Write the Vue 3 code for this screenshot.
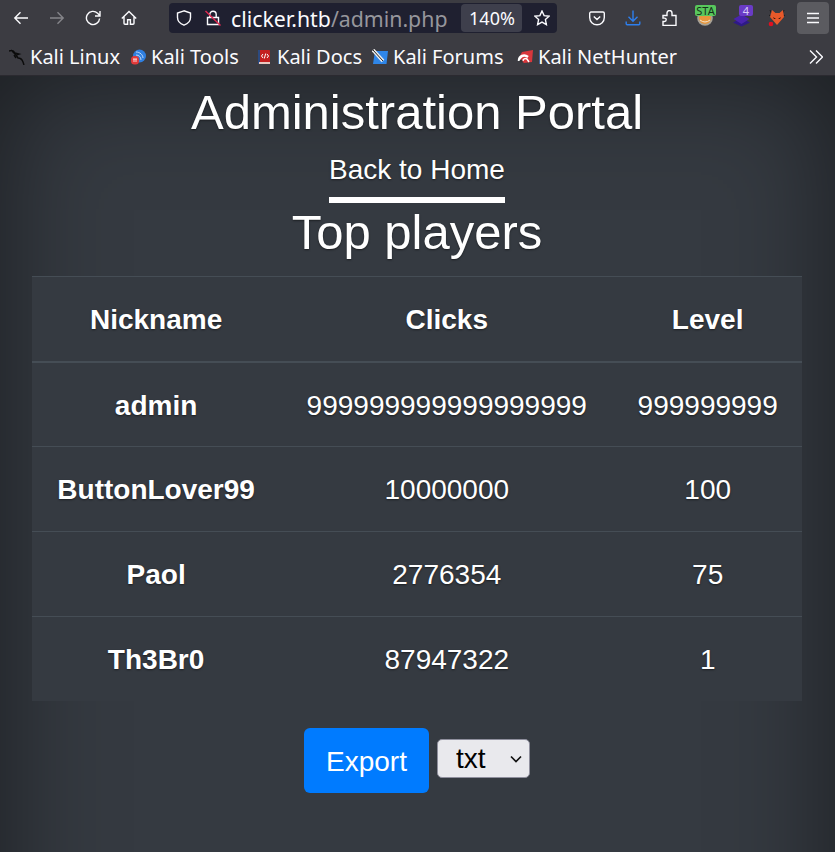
<script setup>
const players = [
  { nick: 'admin', clicks: '999999999999999999', level: '999999999' },
  { nick: 'ButtonLover99', clicks: '10000000', level: '100' },
  { nick: 'Paol', clicks: '2776354', level: '75' },
  { nick: 'Th3Br0', clicks: '87947322', level: '1' },
];
// width = distance to the next favicon
const bookmarks = [
  { name: 'Kali Linux', icon: 'linux', width: 121 },
  { name: 'Kali Tools', icon: 'tools', width: 126 },
  { name: 'Kali Docs', icon: 'docs', width: 116 },
  { name: 'Kali Forums', icon: 'forums', width: 145 },
  { name: 'Kali NetHunter', icon: 'nethunter', width: 170 },
];
</script>

<template>
  <div class="browser">
    <header class="chrome">
      <div class="toolbar">
        <div class="btns">
          <svg class="ico" viewBox="0 0 16 16"><path d="M15 8H1.800M7.500 2.300 1.800 8l5.700 5.700" /></svg>
          <svg class="ico dim" viewBox="0 0 16 16"><path d="M1 8h13.200M8.500 2.300 14.200 8l-5.700 5.700" /></svg>
          <svg class="ico" viewBox="0 0 16 16"><path d="M14.600 8.500A6.600 6.600 0 1 1 12.600 3.200L14.800 5.500M15 1v5H10" /></svg>
          <svg class="ico" viewBox="0 0 16 16"><path d="M.8 8.500 8 1.500l7.200 7M3 6.800v6.400c0 .7.400 1.100 1 1.100h2.600v-4.500h2.800v4.500H12c.600 0 1-.4 1-1.100V6.800" /></svg>
        </div>
        <div class="urlbar">
          <svg class="ico shield" viewBox="0 0 16 16"><path d="M8 .8 1.500 3v4.500c0 3.800 2.800 6.300 6.500 7.700 3.700-1.400 6.500-3.900 6.500-7.700V3z" /></svg>
          <svg class="ico lock" viewBox="0 0 16 16">
            <path d="M4.800 7.500V4.500a3.200 3.200 0 0 1 6.400 0V7.500M2.500 7.500h11v7h-11z" />
            <path class="red" d="M.5 1 15.500 15.500" />
          </svg>
          <span class="url">clicker.htb<span class="path">/admin.php</span></span>
          <span class="zoom">140%</span>
          <svg class="ico star" viewBox="0 0 16 16"><path d="M8 1l2.100 4.600 5 .6-3.700 3.400 1 5L8 12.100l-4.400 2.500 1-5L.9 6.200l5-.6z" /></svg>
        </div>
        <div class="tools">
          <svg class="ico" viewBox="0 0 16 16"><path d="M2 2h12a1.300 1.300 0 0 1 1.300 1.300V7.500a7.300 7.300 0 0 1-14.600 0V3.300A1.300 1.300 0 0 1 2 2zM4.800 6.500 8 9.600l3.200-3.100" /></svg>
          <svg class="ico blue" viewBox="0 0 16 16"><path d="M8 .5V11M3.500 6.800 8 11.300l4.500-4.500M1.200 11.500v2.300c0 .6.400 1 1 1h11.600c.6 0 1-.4 1-1v-2.300" /></svg>
          <svg class="ico" viewBox="0 0 16 16"><path d="M2 5.500h4V3a2.500 2.500 0 0 1 5 0v2.500h4V15.500H2v-4h1.500a1.700 1.700 0 0 0 0-3.400H2z" /></svg>
          <span class="ext">
            <svg viewBox="0 0 22 22" width="22" height="22">
              <circle cx="11" cy="11" r="7.800" fill="#a8a296" />
              <circle cx="11" cy="11" r="6" fill="#e8963c" />
              <path d="M6 13q5 4 10 0" fill="none" stroke="#f4e6d0" />
            </svg>
            <span class="tag green">STA</span>
          </span>
          <span class="ext">
            <svg viewBox="0 0 22 22" width="22" height="22">
              <path d="M11.500 11l8.500 4.500-8.500 4-8.500-4z" fill="#2e1a86" />
              <path d="M11.500 7.500l8 4.500-8 5-8-5z" fill="#4a24ad" />
            </svg>
            <span class="tag purple">4</span>
          </span>
          <span class="ext">
            <svg viewBox="0 0 22 22" width="22" height="22">
              <path d="M4 3l2 5M18 3l-2 5M3 8l3 2M19 8l-3 2" stroke="#1c1c1c" fill="none" />
              <path d="M6 3l3.500 3h4L17 3l1 7-7 8-7-8z" fill="#e8592a" />
              <path d="M7 10l3 2H8zM15 10l-3 2h2z" fill="#3a1408" />
              <circle cx="5" cy="17" r="2.300" fill="#e01020" />
            </svg>
          </span>
          <button class="menu">
            <svg viewBox="0 0 16 16" width="16" height="16"><path d="M2 3.500h12M2 8h12M2 12.500h12" /></svg>
          </button>
        </div>
      </div>
      <div class="bookmarks">
        <div class="bm-list">
          <span v-for="b in bookmarks" :key="b.name" class="bm" :style="{ width: b.width + 'px' }">
            <svg v-if="b.icon === 'linux'" viewBox="0 0 16 16" width="16" height="16">
              <path d="M0 2c3-1 5 0 6 2l4 1-3 1 2 3c2 0 4 1 5 4l1 3M2 1c3 3 3 3 5 5M5 6l2 3" fill="none" stroke="#0b0b0b" stroke-width="1.400" />
            </svg>
            <svg v-else-if="b.icon === 'tools'" viewBox="0 0 16 16" width="16" height="16">
              <circle cx="9.500" cy="7" r="6.500" fill="#2f7fe0" />
              <path d="M6 3c4 0 7 3 7 6M6 6c3 0 5 2 5 5" fill="none" stroke="#bcd8f8" />
              <rect x="1" y="7" width="8" height="8.500" rx="3.500" fill="#e23a3a" />
              <path d="M3 10h4M4 10v3M6 10v3" stroke="#fff" fill="none" stroke-width=".8" />
            </svg>
            <svg v-else-if="b.icon === 'docs'" viewBox="0 0 16 16" width="16" height="16">
              <rect x="2" y="1" width="12" height="14" rx="1" fill="#c41f1f" />
              <path d="M2 1h2v14H2z" fill="#2c4a80" />
              <path d="M3 13h11v2H3z" fill="#e8c8c0" />
              <path d="M7 5 5.500 7 7 9M11 5l1.500 2L11 9M9.700 4.500 8.300 9.500" fill="none" stroke="#fff" />
            </svg>
            <svg v-else-if="b.icon === 'forums'" viewBox="0 0 16 16" width="16" height="16">
              <path d="M3 2h13l-1.500 13H1z" fill="#2f86e8" />
              <path d="M1 1l10 11" stroke="#eeeeee" stroke-width="3.500" />
              <path d="M1 1l10 11" stroke="#222" />
            </svg>
            <svg v-else viewBox="0 0 16 16" width="16" height="16">
              <path d="M5 3l11-2-1 12-8 1-5-5z" fill="#d8373c" />
              <path d="M2 12c0-5 5-7 9-4" fill="none" stroke="#fff" stroke-width="2.500" />
              <path d="M6 12c0-2 2-3 4-2l2 3" fill="none" stroke="#fff" stroke-width="1.500" />
              <circle cx="4" cy="12" r="1.500" fill="#333" />
            </svg>
            {{ b.name }}
          </span>
        </div>
        <svg class="ico more" viewBox="0 0 16 16"><path d="M3 1.500 9.500 8 3 14.500M9 1.500 15.500 8 9 14.500" /></svg>
      </div>
    </header>

    <main class="cover">
      <h1>Administration Portal</h1>
      <nav class="masthead"><a class="active">Back to Home</a></nav>
      <h2>Top players</h2>
      <table class="players">
        <thead>
          <tr>
            <th>Nickname</th>
            <th>Clicks</th>
            <th>Level</th>
          </tr>
        </thead>
        <tbody>
          <tr v-for="p in players" :key="p.nick">
            <th>{{ p.nick }}</th>
            <td>{{ p.clicks }}</td>
            <td>{{ p.level }}</td>
          </tr>
        </tbody>
      </table>
      <div class="export">
        <button class="btn">Export</button>
        <span class="format-wrap">
          <select class="format">
            <option>txt</option>
          </select>
          <svg class="chevron" viewBox="0 0 12 8" width="12" height="8"><path d="M1 1.500 6 6.500l5-5" /></svg>
        </span>
      </div>
    </main>
  </div>
</template>

<style>
html, body { margin: 0; padding: 0; background: #353a41; }
</style>

<style scoped>
.browser {
  width: 835px;
  height: 852px;
  overflow: hidden;
  font-family: "Liberation Sans", Arial, sans-serif;
}

.chrome {
  height: 75px;
  background: #3c3c42;
  color: #fbfbfe;
  font-family: "Noto Sans", sans-serif;
  border-bottom: 1px solid #2b2a30;
}
.toolbar {
  height: 38px;
  padding: 2px 4px 4px 3px;
  box-sizing: border-box;
  display: flex;
  align-items: center;
}
.btns {
  display: grid;
  grid-template-columns: repeat(4, 36px);
  justify-items: center;
}
.ico {
  width: 16px;
  height: 16px;
  flex: none;
  fill: none;
  stroke: #fbfbfe;
  stroke-width: 1.400;
}
.ico.dim { stroke: #85858a; }
.ico.blue { stroke: #2d7fee; }
.lock .red { stroke: #e22850; }
.urlbar {
  margin-left: 22px;
  width: 388px;
  height: 30px;
  background: #1f2030;
  border-radius: 4px;
  display: flex;
  align-items: center;
  padding-left: 7px;
  box-sizing: border-box;
}
.lock { margin-left: 13px; }
.url { margin-left: 10px; font-size: 21.300px; white-space: nowrap; }
.path { color: #96969c; }
.zoom {
  margin-left: 14px;
  background: #3e3f4c;
  border-radius: 4px;
  width: 61px;
  height: 28px;
  line-height: 28px;
  text-align: center;
  font-size: 18px;
}
.star { margin-left: 12px; }
.tools {
  margin-left: 22px;
  display: grid;
  grid-template-columns: repeat(7, 36px);
  justify-items: center;
  align-items: center;
}
.ext { position: relative; width: 22px; height: 22px; }
.ext svg { display: block; }
.tag {
  position: absolute;
  top: -2px;
  left: 1px;
  width: 21px;
  height: 11px;
  font-size: 11px;
  line-height: 11px;
  text-align: center;
  border-radius: 2px;
}
.tag.green { background: #58c75c; color: #16301a; }
.tag.purple { left: 9px; width: 14px; background: #6a3bc6; color: #d8ccf8; }
.menu {
  width: 32px;
  height: 32px;
  border: 0;
  padding: 0;
  border-radius: 4px;
  background: #5b5b60;
  display: flex;
  align-items: center;
  justify-content: center;
}
.menu path { stroke: #fbfbfe; stroke-width: 1.400; fill: none; }

.bookmarks {
  height: 37px;
  display: flex;
  align-items: center;
  justify-content: space-between;
  padding: 0 12px 0 9px;
}
.bm-list { display: flex; }
.bm { display: flex; align-items: center; gap: 5px; font-size: 20px; white-space: nowrap; }

.cover {
  height: 1000px;
  box-sizing: border-box;
  padding: 0 33px 0 32px;
  background: #353a41;
  box-shadow: inset 0 0 112px rgba(0, 0, 0, 0.5);
  color: #fff;
  text-align: center;
  text-shadow: 0 1px 2px rgba(0, 0, 0, 0.5);
  overflow: hidden;
}
h1 {
  margin: 5px 0 0;
  font-size: 49px;
  font-weight: 400;
  line-height: 62px;
}
.masthead { margin-top: 6px; }
.masthead a {
  display: inline-block;
  font-size: 28px;
  line-height: 42px;
  padding-bottom: 6px;
  border-bottom: 6px solid #fff;
}
h2 {
  margin: 0 0 14px;
  font-size: 49px;
  font-weight: 400;
  line-height: 59px;
}
.players {
  width: 100%;
  border-collapse: collapse;
  background: #353a41;
  font-size: 28px;
  line-height: 42px;
}
.players th,
.players td {
  padding: 22px 25px 20px;
  border-top: 1px solid #454d55;
  text-align: center;
}
.players th:first-child { padding-right: 26px; }
.players tr > :last-child { padding-right: 24px; }
.players thead th { border-bottom: 2px solid #454d55; }
.players tbody tr:first-child > * { padding-bottom: 19px; }
.export {
  margin-top: 27px;
  display: flex;
  justify-content: center;
  align-items: flex-start;
  gap: 8px;
}
.btn {
  height: 65px;
  width: 125px;
  border: 0;
  padding: 2px 0 0;
  border-radius: 6px;
  background: #007bff;
  color: #fff;
  font: 28px "Liberation Sans", Arial, sans-serif;
}
.format-wrap { position: relative; margin-top: 11px; }
.format {
  appearance: none;
  display: block;
  width: 93px;
  height: 39px;
  font: 28px "Liberation Sans", Arial, sans-serif;
  padding-left: 18px;
  background: #e9e9ed;
  color: #000;
  border: 1px solid #8f8f9d;
  border-radius: 5px;
}
.chevron {
  position: absolute;
  top: 16px;
  right: 8px;
}
.chevron path { fill: none; stroke: #111; stroke-width: 1.700; }
</style>
